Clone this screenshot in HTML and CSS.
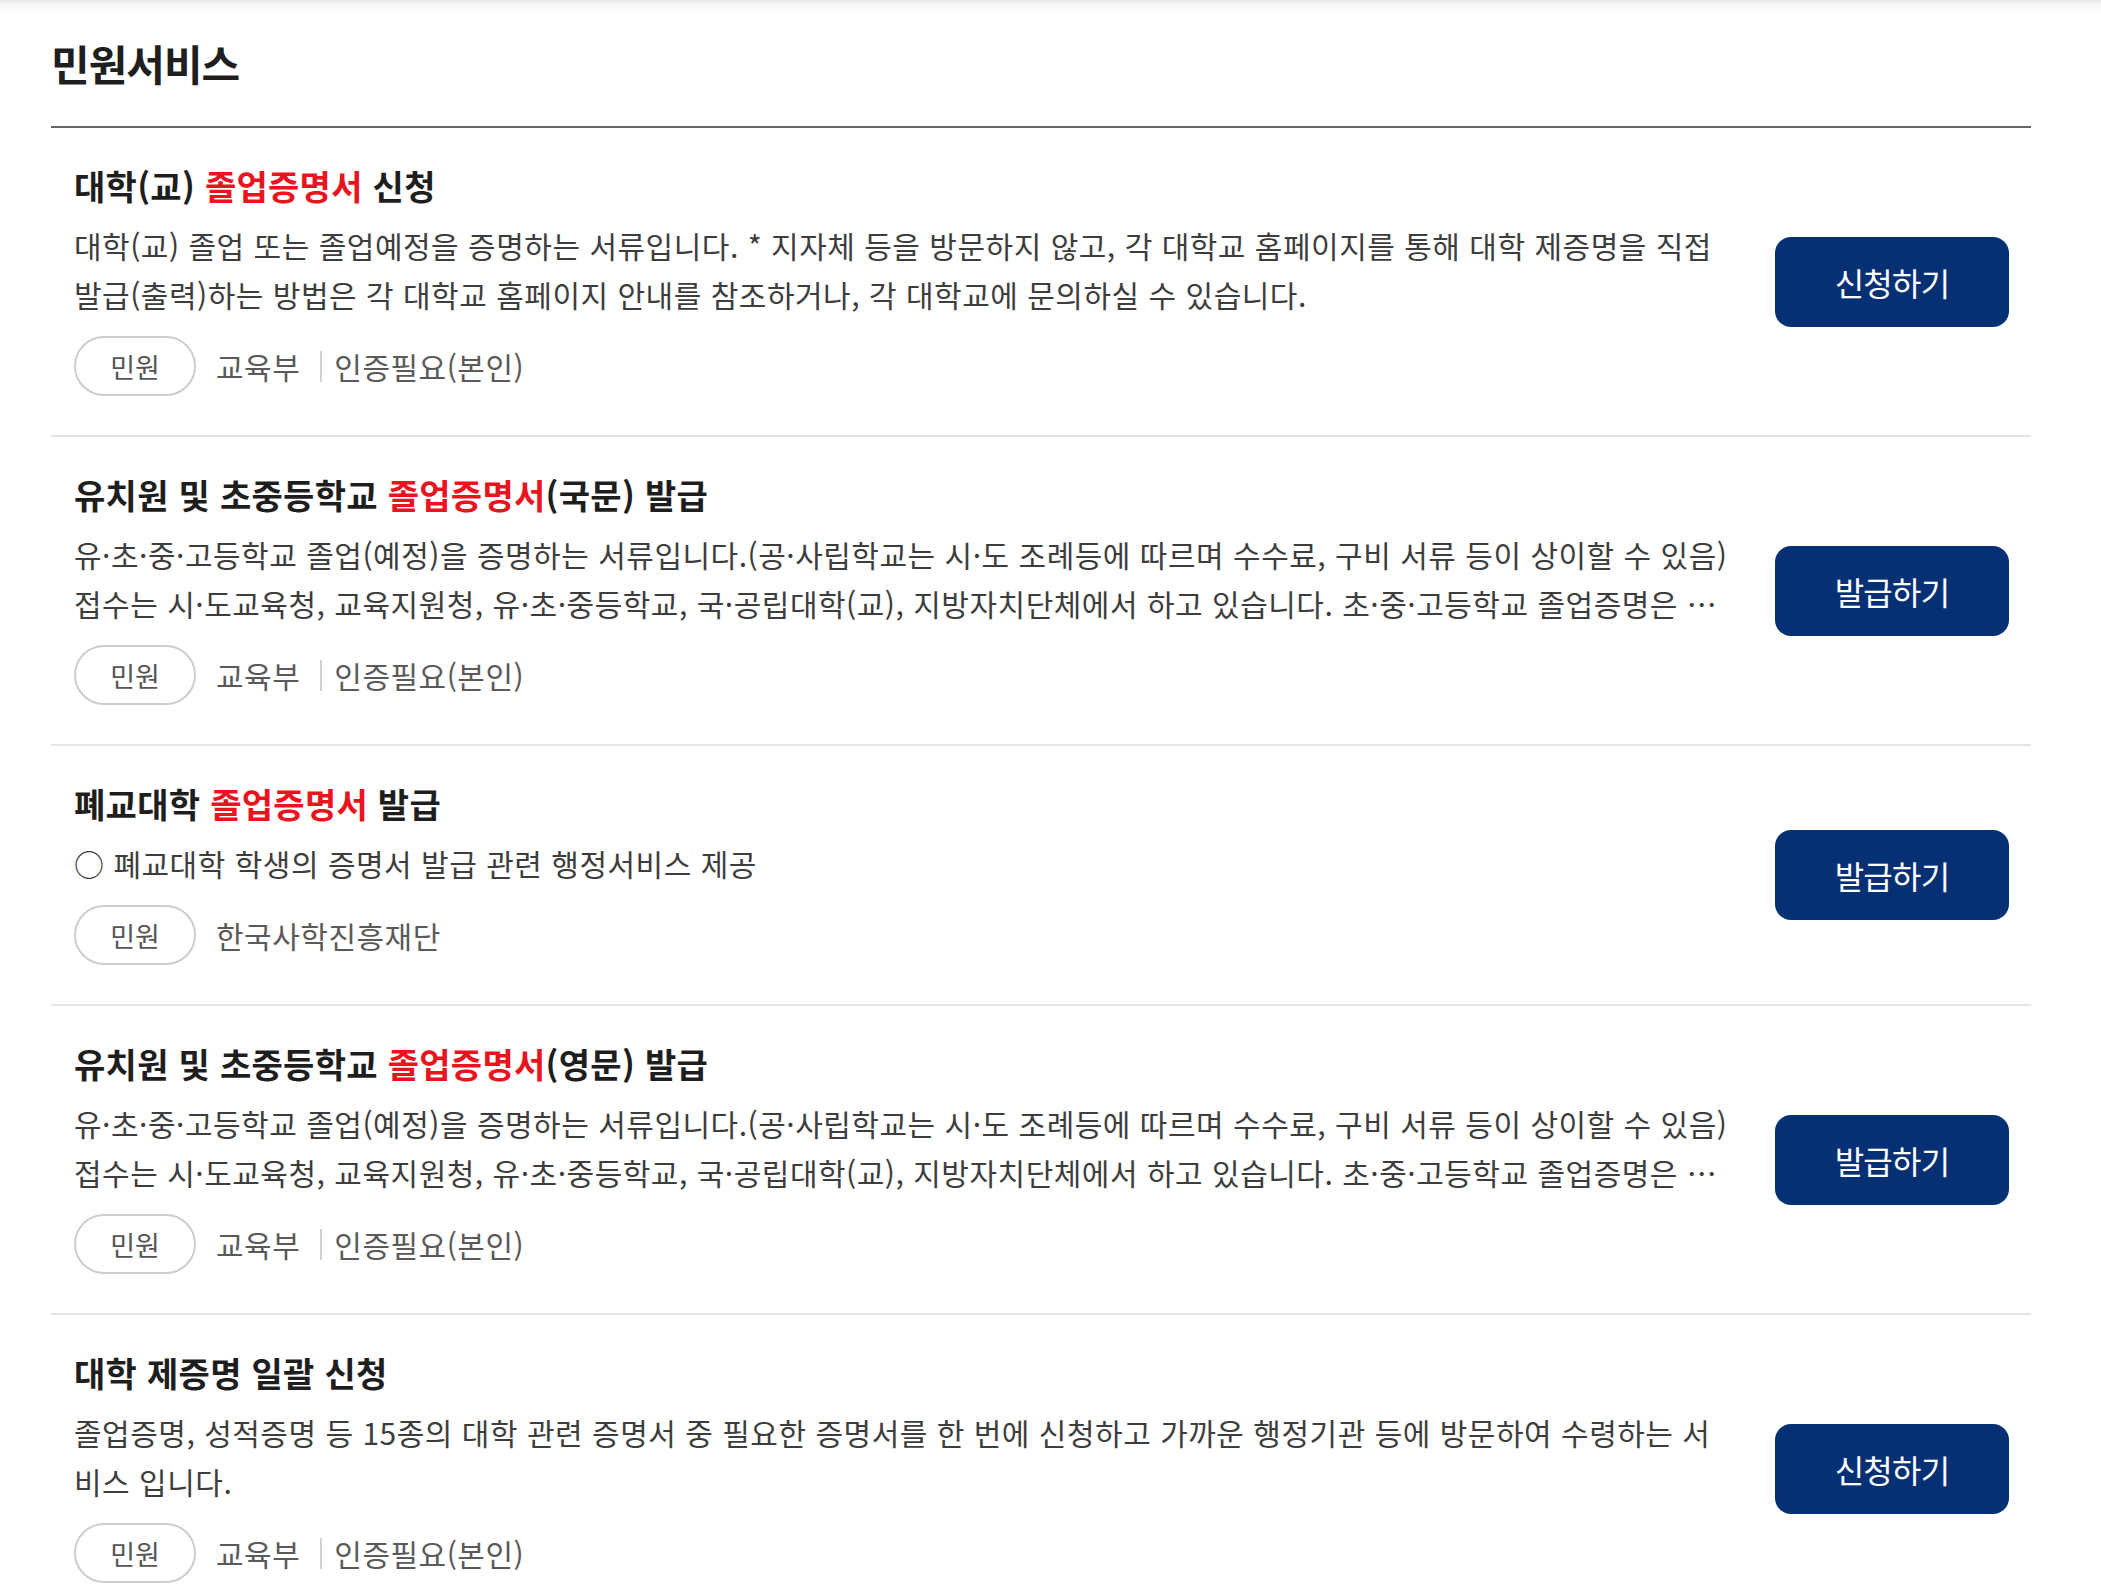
FILE: index.html
```html
<!DOCTYPE html>
<html lang="ko">
<head>
<meta charset="utf-8">
<title>민원서비스</title>
<link rel="stylesheet" href="styles.css">
</head>
<body>
<div class="wrap">
  <header class="page-head">
    <h2 class="page-title">민원서비스</h2>
  </header>
  <ul class="svc-list">
    <li class="svc">
      <div class="svc-body">
        <h3 class="svc-title">대학(교) <em class="hl">졸업증명서</em> 신청</h3>
        <p class="svc-desc">대학(교) 졸업 또는 졸업예정을 증명하는 서류입니다. * 지자체 등을 방문하지 않고, 각 대학교 홈페이지를 통해 대학 제증명을 직접 발급(출력)하는 방법은 각 대학교 홈페이지 안내를 참조하거나, 각 대학교에 문의하실 수 있습니다.</p>
        <div class="svc-meta">
          <span class="pill">민원</span>
          <span class="meta-item">교육부</span>
          <span class="meta-sep"></span>
          <span class="meta-item">인증필요(본인)</span>
        </div>
      </div>
      <a class="btn" href="#">신청하기</a>
    </li>
    <li class="svc">
      <div class="svc-body">
        <h3 class="svc-title">유치원 및 초중등학교 <em class="hl">졸업증명서</em>(국문) 발급</h3>
        <p class="svc-desc">유·초·중·고등학교 졸업(예정)을 증명하는 서류입니다.(공·사립학교는 시·도 조례등에 따르며 수수료, 구비 서류 등이 상이할 수 있음)<br>접수는 시·도교육청, 교육지원청, 유·초·중등학교, 국·공립대학(교), 지방자치단체에서 하고 있습니다. 초·중·고등학교 졸업증명은 …</p>
        <div class="svc-meta">
          <span class="pill">민원</span>
          <span class="meta-item">교육부</span>
          <span class="meta-sep"></span>
          <span class="meta-item">인증필요(본인)</span>
        </div>
      </div>
      <a class="btn" href="#">발급하기</a>
    </li>
    <li class="svc">
      <div class="svc-body">
        <h3 class="svc-title">폐교대학 <em class="hl">졸업증명서</em> 발급</h3>
        <p class="svc-desc">○ 폐교대학 학생의 증명서 발급 관련 행정서비스 제공</p>
        <div class="svc-meta">
          <span class="pill">민원</span>
          <span class="meta-item">한국사학진흥재단</span>
        </div>
      </div>
      <a class="btn" href="#">발급하기</a>
    </li>
    <li class="svc">
      <div class="svc-body">
        <h3 class="svc-title">유치원 및 초중등학교 <em class="hl">졸업증명서</em>(영문) 발급</h3>
        <p class="svc-desc">유·초·중·고등학교 졸업(예정)을 증명하는 서류입니다.(공·사립학교는 시·도 조례등에 따르며 수수료, 구비 서류 등이 상이할 수 있음)<br>접수는 시·도교육청, 교육지원청, 유·초·중등학교, 국·공립대학(교), 지방자치단체에서 하고 있습니다. 초·중·고등학교 졸업증명은 …</p>
        <div class="svc-meta">
          <span class="pill">민원</span>
          <span class="meta-item">교육부</span>
          <span class="meta-sep"></span>
          <span class="meta-item">인증필요(본인)</span>
        </div>
      </div>
      <a class="btn" href="#">발급하기</a>
    </li>
    <li class="svc">
      <div class="svc-body">
        <h3 class="svc-title">대학 제증명 일괄 신청</h3>
        <p class="svc-desc">졸업증명, 성적증명 등 15종의 대학 관련 증명서 중 필요한 증명서를 한 번에 신청하고 가까운 행정기관 등에 방문하여 수령하는 서비스 입니다.</p>
        <div class="svc-meta">
          <span class="pill">민원</span>
          <span class="meta-item">교육부</span>
          <span class="meta-sep"></span>
          <span class="meta-item">인증필요(본인)</span>
        </div>
      </div>
      <a class="btn" href="#">신청하기</a>
    </li>
  </ul>
</div>
</body>
</html>
```

FILE: styles.css
```css
html, body {
  margin: 0;
  padding: 0;
}
body {
  background: #fff linear-gradient(to bottom, #e8e8e8 0, #f7f7f7 5px, #fff 14px) no-repeat;
  background-size: 100% 14px;
  font-family: "Noto Sans CJK KR", "Noto Sans", sans-serif;
  color: #222;
}
.wrap {
  width: 1980px;
  margin-left: 51px;
}
.page-head {
  padding: 35px 0 35px;
  border-bottom: 2px solid #666;
}
.page-title {
  margin: 0;
  font-size: 42px;
  line-height: 56px;
  font-weight: 700;
  letter-spacing: -1px;
  color: #1f1f1f;
}
.svc-list {
  list-style: none;
  margin: 0;
  padding: 0;
}
.svc {
  display: flex;
  align-items: center;
  padding: 35px 22px 39px 23px;
  border-bottom: 2px solid #e4e4e4;
}
.svc-body {
  flex: 1;
  min-width: 0;
}
.svc-title {
  margin: 0;
  font-size: 34px;
  line-height: 46px;
  font-weight: 700;
  color: #1e1e1e;
  letter-spacing: 0.3px;
}
.hl {
  font-style: normal;
  color: #e8151f;
}
.svc-desc {
  margin: 12px 0 0;
  font-size: 30px;
  line-height: 49px;
  color: #3d3d3d;
  letter-spacing: 0.5px;
  word-break: break-all;
  display: -webkit-box;
  -webkit-box-orient: vertical;
  -webkit-line-clamp: 2;
  overflow: hidden;
}
.svc-meta {
  margin-top: 17px;
  display: flex;
  align-items: center;
  height: 60px;
}
.pill {
  box-sizing: border-box;
  width: 122px;
  height: 60px;
  border: 2px solid #cdcdcd;
  border-radius: 30px;
  display: flex;
  align-items: center;
  justify-content: center;
  font-size: 27px;
  color: #555;
  margin-right: 20px;
}
.meta-item {
  font-size: 30px;
  color: #5a5a5a;
  line-height: 40px;
  letter-spacing: 0.5px;
}
.meta-sep {
  width: 2px;
  height: 31px;
  background: #d2d2d2;
  margin: 0 12px 0 20px;
}
.btn {
  flex: none;
  width: 234px;
  height: 90px;
  margin: 4px 0 0 42px;
  border-radius: 16px;
  background: #053174;
  color: #fff;
  text-decoration: none;
  display: flex;
  align-items: center;
  justify-content: center;
  font-size: 32px;
  letter-spacing: -0.8px;
}
```
